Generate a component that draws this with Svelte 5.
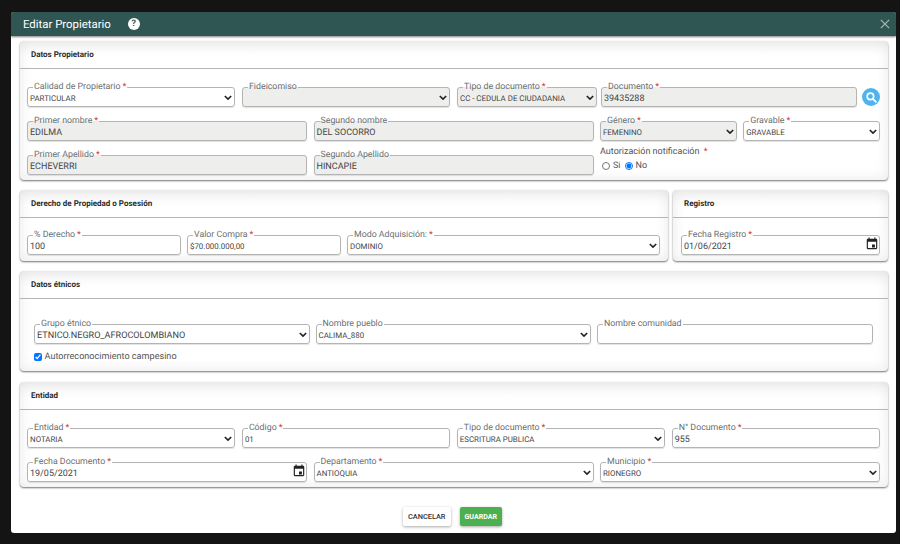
<script>
  const sel = (label, value, opts = {}) => ({ label, value, kind: 'select', ...opts });
  const inp = (label, value, opts = {}) => ({ label, value, kind: 'input', ...opts });
  const date = (label, value) => ({ label, value, kind: 'date', required: true });

  const propietarioRows = [
    {
      cols: 'r-prop1',
      fields: [
        sel('Calidad de Propietario', 'PARTICULAR', { required: true }),
        sel('Fideicomiso', '', { disabled: true }),
        sel('Tipo de documento', 'CC - CEDULA DE CIUDADANIA', { required: true, disabled: true }),
        inp('Documento', '39435288', { required: true, disabled: true })
      ],
      search: true
    },
    {
      cols: 'r-prop2',
      fields: [
        inp('Primer nombre', 'EDILMA', { required: true, disabled: true }),
        inp('Segundo nombre', 'DEL SOCORRO', { disabled: true }),
        sel('Género', 'FEMENINO', { required: true, disabled: true }),
        sel('Gravable', 'GRAVABLE', { required: true })
      ]
    }
  ];

  const apellidos = [
    inp('Primer Apellido', 'ECHEVERRI', { required: true, disabled: true }),
    inp('Segundo Apellido', 'HINCAPIE', { disabled: true })
  ];

  const derecho = [
    inp('% Derecho', '100', { required: true }),
    inp('Valor Compra', '$70.000.000,00', { required: true, small: true }),
    sel('Modo Adquisición:', 'DOMINIO', { required: true })
  ];

  const etnicos = [
    sel('Grupo étnico', 'ETNICO.NEGRO_AFROCOLOMBIANO', { big: true }),
    sel('Nombre pueblo', 'CALIMA_880'),
    inp('Nombre comunidad', '')
  ];

  const entidad1 = [
    sel('Entidad', 'NOTARIA', { required: true }),
    inp('Código', '01', { required: true, small: true }),
    sel('Tipo de documento', 'ESCRITURA PUBLICA', { required: true }),
    inp('N° Documento', '955', { required: true })
  ];

  const entidad2 = [
    date('Fecha Documento', '19/05/2021'),
    sel('Departamento', 'ANTIOQUIA', { required: true }),
    sel('Municipio', 'RIONEGRO', { required: true })
  ];
</script>

{#snippet field(f)}
  <fieldset class="field" class:off={f.disabled}>
    <legend>{f.label}{#if f.required}<span class="req">*</span>{/if}</legend>
    <div class="value" class:sm={f.kind === 'select' || f.small} class:big={f.big}>{f.value}</div>
    {#if f.kind === 'select'}
      <svg class="chev" viewBox="0 0 10 7" width="8" height="5.6"><path d="M1 1.2 5 5.2 9 1.2" fill="none" stroke="#222" stroke-width="2" /></svg>
    {:else if f.kind === 'date'}
      <svg class="cal" viewBox="0 0 24 24" width="14" height="14"><path fill="#222" d="M19 3h-1V1h-2v2H8V1H6v2H5c-1.1 0-2 .9-2 2v14c0 1.1.9 2 2 2h14c1.1 0 2-.9 2-2V5c0-1.1-.9-2-2-2zm0 16H5V8h14v11zM12 13h5v5h-5z" /></svg>
    {/if}
  </fieldset>
{/snippet}

<div class="modal">
  <header class="top">
    <h1>Editar Propietario</h1>
    <span class="help">?</span>
    <svg class="close" viewBox="0 0 12 12" width="10" height="10"><path d="M1 1 11 11M11 1 1 11" stroke="#a3b5b2" stroke-width="1.5" fill="none" /></svg>
  </header>

  <div class="content">
    <section class="card">
      <h2>Datos Propietario</h2>
      <div class="body">
        {#each propietarioRows as row}
          <div class="row {row.cols}">
            {#each row.fields as f}
              {@render field(f)}
            {/each}
            {#if row.search}
              <button class="search" aria-label="Buscar">
                <svg viewBox="0 0 24 24" width="13" height="13"><circle cx="10" cy="10" r="6" fill="none" stroke="#fff" stroke-width="3" /><path d="M15 15 21 21" stroke="#fff" stroke-width="3.4" /></svg>
              </button>
            {/if}
          </div>
        {/each}
        <div class="row r-prop3">
          {#each apellidos as f}
            {@render field(f)}
          {/each}
          <div class="auth">
            <div class="auth-label">Autorización notificación <span class="req">*</span></div>
            <div class="radios">
              <label><input type="radio" name="auth" />Si</label>
              <label><input type="radio" name="auth" checked />No</label>
            </div>
          </div>
        </div>
      </div>
    </section>

    <div class="split">
      <section class="card">
        <h2>Derecho de Propiedad o Posesión</h2>
        <div class="body tight">
          <div class="row r-derecho">
            {#each derecho as f}
              {@render field(f)}
            {/each}
          </div>
        </div>
      </section>
      <section class="card">
        <h2>Registro</h2>
        <div class="body tight reg">
          {@render field(date('Fecha Registro', '01/06/2021'))}
        </div>
      </section>
    </div>

    <section class="card">
      <h2>Datos étnicos</h2>
      <div class="body etnico">
        <div class="row r-etnico">
          {#each etnicos as f}
            {@render field(f)}
          {/each}
        </div>
        <label class="check"><input type="checkbox" checked />Autorreconocimiento campesino</label>
      </div>
    </section>

    <section class="card entidad">
      <h2>Entidad</h2>
      <div class="body">
        <div class="row r-ent1">
          {#each entidad1 as f}
            {@render field(f)}
          {/each}
        </div>
        <div class="row r-ent2">
          {#each entidad2 as f}
            {@render field(f)}
          {/each}
        </div>
      </div>
    </section>

    <footer>
      <button class="btn">CANCELAR</button>
      <button class="btn save">GUARDAR</button>
    </footer>
  </div>
</div>

<style>
  :global(body) {
    background: #141414;
    font-family: Roboto, "Liberation Sans", sans-serif;
    text-rendering: geometricPrecision;
  }

  .modal {
    box-sizing: border-box;
    width: 885px;
    height: 521px;
    margin: 12px 0 0 11px;
    background: #fff;
    border-radius: 3px;
    overflow: hidden;
  }

  .top {
    display: flex;
    align-items: center;
    height: 24px;
    padding: 0 6px 0 12px;
    background: #2f5652;
    box-shadow: 0 1px 2px rgba(0, 0, 0, 0.5);
  }

  h1 {
    margin: 0;
    font-size: 11.4px;
    font-weight: 400;
    color: #fff;
  }

  .help {
    width: 12px;
    height: 12px;
    margin-left: 17px;
    border-radius: 50%;
    background: #fff;
    color: #2f5652;
    font-size: 9px;
    font-weight: 700;
    line-height: 12px;
    text-align: center;
  }

  .close {
    margin-left: auto;
  }

  .content {
    display: flex;
    flex-direction: column;
    gap: 10px;
    padding: 5px 8px 0 9px;
  }

  .card {
    background: #fff;
    border-radius: 4px;
    box-shadow: 0 1px 2px rgba(0, 0, 0, 0.55), inset 0 0 14px rgba(0, 0, 0, 0.09);
  }

  .entidad {
    margin-top: 1px;
  }

  h2 {
    margin: 0;
    height: 27px;
    padding-left: 11px;
    font-size: 8px;
    font-weight: 700;
    line-height: 28px;
    color: #2b2b2b;
    border-bottom: 1px solid #b5b5b5;
    border-radius: 4px 4px 0 0;
    background: linear-gradient(rgba(0, 0, 0, 0.04), transparent 60%);
  }

  .body {
    padding: 12px 8px 5px 7px;
    display: flex;
    flex-direction: column;
    gap: 8px;
  }

  .tight {
    padding-top: 11px;
    padding-bottom: 6px;
  }

  .reg {
    padding-left: 8px;
  }

  .etnico {
    padding: 19px 15px 9px 14px;
    gap: 8px;
  }

  .row {
    display: grid;
    column-gap: 6.5px;
  }

  .r-prop1 {
    grid-template-columns: 215px 215px 144px 256px 1fr;
    column-gap: 0;
  }

  .r-prop1 > .field:nth-child(-n + 2) {
    margin-right: 7px;
  }

  .r-prop1 > .field:nth-child(3) {
    margin-right: 4px;
  }

  .r-prop2 {
    grid-template-columns: 280px 280px 1fr 1fr;
  }

  .r-prop3 {
    grid-template-columns: 280px 280px 1fr;
  }

  .r-derecho {
    grid-template-columns: 154px 154px 1fr;
    column-gap: 6px;
  }

  .r-etnico {
    grid-template-columns: 275.5px 275.5px 1fr;
    column-gap: 6px;
  }

  .r-ent1 {
    grid-template-columns: repeat(4, 1fr);
  }

  .r-ent2 {
    grid-template-columns: repeat(3, 1fr);
  }

  .split {
    display: grid;
    grid-template-columns: 648px 1fr;
    gap: 5px;
  }

  .field {
    position: relative;
    box-sizing: border-box;
    min-width: 0;
    height: 26px;
    margin: 0;
    padding: 0 2px;
    background: #fff;
    border: 1px solid #b4b4b4;
    border-radius: 3px;
    box-shadow: 0 1px 1px rgba(0, 0, 0, 0.12);
  }

  .field.off {
    background: #eeefed;
  }

  legend {
    margin-left: 3px;
    padding: 0 1px;
    font-size: 8.8px;
    line-height: 12px;
    color: #6b6f72;
    white-space: nowrap;
  }

  .req {
    margin-left: 2px;
    color: #d33a3a;
  }

  .value {
    font-size: 9px;
    line-height: 13px;
    color: #444;
    white-space: nowrap;
  }

  .value.sm {
    margin-top: -1px;
    font-size: 7.9px;
  }

  .value.big {
    margin-top: 0;
    font-size: 9.1px;
  }

  .chev {
    position: absolute;
    right: 2px;
    top: 1.5px;
  }

  .cal {
    position: absolute;
    right: 0;
    top: -4px;
  }

  .search {
    align-self: end;
    justify-self: end;
    width: 18px;
    height: 18px;
    margin: 0 0 1px 0;
    padding: 0;
    display: grid;
    place-items: center;
    border: 0;
    border-radius: 50%;
    background: #4fb4ee;
  }

  .auth {
    margin-top: -3px;
  }

  .auth-label {
    font-size: 9px;
    line-height: 13px;
    color: #555;
  }

  .radios {
    display: flex;
    gap: 4px;
    margin-top: 2px;
    padding-left: 2px;
  }

  .radios label,
  .check {
    display: flex;
    align-items: center;
    font-size: 9px;
    color: #555;
  }

  .radios input {
    width: 8px;
    height: 8px;
    margin: 0 3px 0 0;
  }

  .check {
    gap: 2.5px;
    font-size: 9.1px;
  }

  .check input {
    width: 8px;
    height: 8px;
    margin: 0;
  }

  footer {
    display: flex;
    justify-content: center;
    gap: 9px;
    margin-top: 10px;
    padding-right: 3px;
  }

  .btn {
    height: 19px;
    padding: 0 5px;
    border: 0;
    border-radius: 2px;
    background: #fff;
    font-family: inherit;
    font-size: 7.4px;
    font-weight: 500;
    color: #333;
    box-shadow: 0 1px 3px rgba(0, 0, 0, 0.35);
  }

  .save {
    background: #4caf50;
    color: #fff;
    font-size: 7.1px;
    font-weight: 700;
  }
</style>
